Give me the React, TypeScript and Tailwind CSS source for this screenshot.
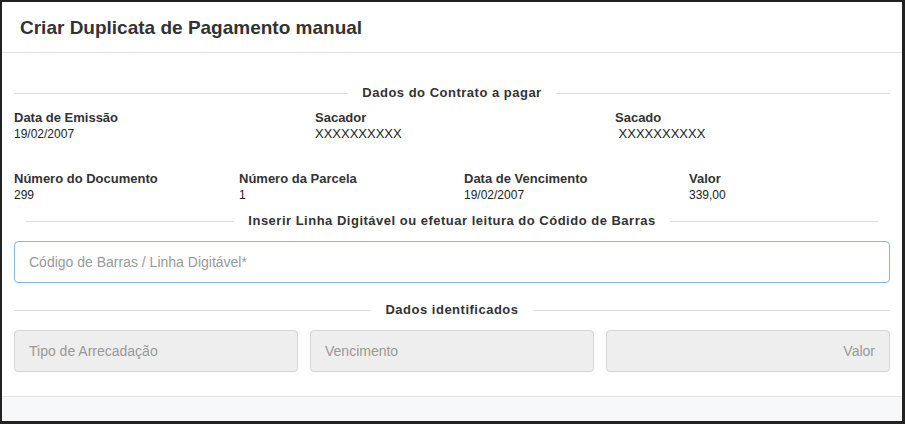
import React from 'react'

const font = { fontFamily: '"Liberation Sans", Arial, sans-serif' }

// título de seção com linhas dos dois lados
function SectionTitle({ text, inset = false }: { text: string; inset?: boolean }) {
  return (
    <div className={`flex items-center h-4 ${inset ? 'px-3' : ''}`}>
      <div className="flex-1 h-px bg-[#dedede]" />
      <div className="px-[14px] text-[13px] leading-4 font-bold text-[#333] tracking-[0.5px] whitespace-nowrap">{text}</div>
      <div className="flex-1 h-px bg-[#dedede]" />
    </div>
  )
}

function Field({ label, value, w, valueClass }: { label: string; value: string; w: string; valueClass?: string }) {
  return (
    <div className={`${w} shrink-0`}>
      <div className="text-[13px] leading-4 font-bold text-[#333]">{label}</div>
      <div className={`leading-4 text-[#222] ${valueClass || 'text-[12px]'}`}>{value}</div>
    </div>
  )
}

export default function App() {
  return (
    <div className="w-[905px] h-[424px] bg-[#222] pt-[2px] pl-[2px] pr-[3px] pb-[3px]" style={font}>
      <div className="h-full bg-white flex flex-col">
        <div className="h-[51px] shrink-0 border-b border-[#e3e3e3] flex items-center pl-[18px]">
          <h1 className="text-[19px] font-bold text-[#333] leading-none">Criar Duplicata de Pagamento manual</h1>
        </div>

        <div className="flex-1 px-3 pt-[32px]">
          <SectionTitle text="Dados do Contrato a pagar" />

          <div className="flex mt-[9px]">
            <Field label="Data de Emissão" value="19/02/2007" w="w-[301px]" />
            <Field label="Sacador" value="XXXXXXXXXX" w="w-[300px]" valueClass="text-[13px]" />
            <Field label="Sacado" value={'\u00a0XXXXXXXXXX'} w="w-[275px]" valueClass="text-[13px]" />
          </div>

          <div className="flex mt-[29px]">
            <Field label="Número do Documento" value="299" w="w-[225px]" />
            <Field label="Número da Parcela" value="1" w="w-[225px]" />
            <Field label="Data de Vencimento" value="19/02/2007" w="w-[225px]" />
            <Field label="Valor" value="339,00" w="w-[201px]" />
          </div>

          <div className="mt-[10px]">
            <SectionTitle text="Inserir Linha Digitável ou efetuar leitura do Códido de Barras" inset />
          </div>

          <input
            className="mt-3 block w-full h-[42px] rounded border border-[#85b6dc] px-[14px] text-[14px] text-[#333] placeholder:text-[#999] outline-none"
            placeholder="Código de Barras / Linha Digitável*"
            style={font}
          />

          <div className="mt-[19px]">
            <SectionTitle text="Dados identificados" />
          </div>

          <div className="mt-3 grid grid-cols-3 gap-3">
            <input disabled className="h-[42px] rounded border border-[#d5d5d5] bg-[#eeeeee] px-[14px] text-[14px] placeholder:text-[#999]" placeholder="Tipo de Arrecadação" style={font} />
            <input disabled className="h-[42px] rounded border border-[#d5d5d5] bg-[#eeeeee] px-[14px] text-[14px] placeholder:text-[#999]" placeholder="Vencimento" style={font} />
            <input disabled className="h-[42px] rounded border border-[#d5d5d5] bg-[#eeeeee] px-[14px] text-[14px] text-right placeholder:text-[#999]" placeholder="Valor" style={font} />
          </div>
        </div>

        <div className="h-[25px] shrink-0 border-t border-[#e3e3e3] bg-[#f7f8fa]" />
      </div>
    </div>
  )
}
